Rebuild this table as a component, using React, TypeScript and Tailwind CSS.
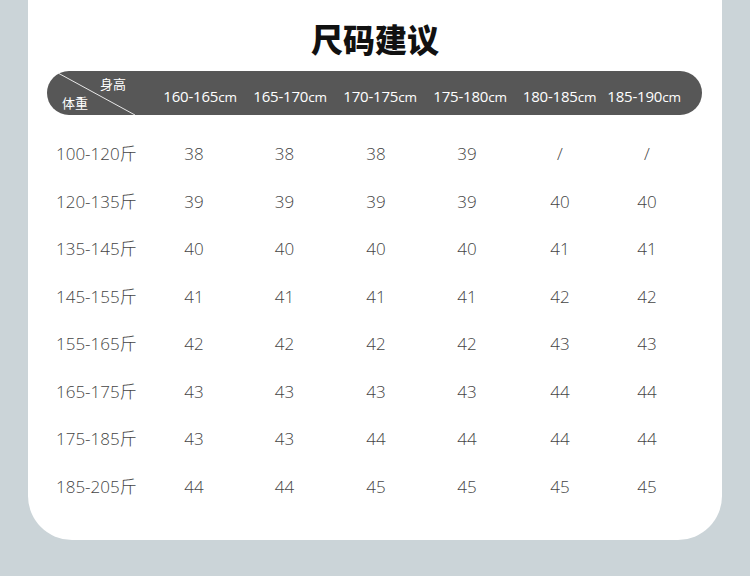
const heights = ["160-165cm", "165-170cm", "170-175cm", "175-180cm", "180-185cm", "185-190cm"];

const rows: [string, string[]][] = [
  ["100-120斤", ["38", "38", "38", "39", "/", "/"]],
  ["120-135斤", ["39", "39", "39", "39", "40", "40"]],
  ["135-145斤", ["40", "40", "40", "40", "41", "41"]],
  ["145-155斤", ["41", "41", "41", "41", "42", "42"]],
  ["155-165斤", ["42", "42", "42", "42", "43", "43"]],
  ["165-175斤", ["43", "43", "43", "43", "44", "44"]],
  ["175-185斤", ["43", "43", "44", "44", "44", "44"]],
  ["185-205斤", ["44", "44", "45", "45", "45", "45"]],
];

function Num({ text }: { text: string }) {
  // split the unit so "cm" can be drawn smaller, like the original font
  const base = text.replace(/cm$/, "");
  return (
    <span>
      {base}
      <span className="text-[13.5px]">cm</span>
    </span>
  );
}

export default function App() {
  return (
    <div className="h-[576px] bg-[#cbd4d8] px-[28px] font-['Open_Sans','Noto_Sans_CJK_SC',sans-serif]">
      <div className="h-[540px] rounded-b-[44px] bg-white">
        <h1 className="pt-[17px] text-center text-[32px] font-black leading-[42px] tracking-[0px] text-[#111] font-['Noto_Sans_CJK_SC',sans-serif]">
          尺码建议
        </h1>

        <div className="mt-[12px] ml-[19px] mr-[20px] h-[44px] rounded-full bg-[#575757] grid grid-cols-[108px_90px_90px_90px_90px_89px_80px] items-center text-white">
          <div className="relative h-[44px]">
            <svg className="absolute left-0 top-0" width="108" height="44" viewBox="0 0 108 44">
              <line x1="11" y1="2" x2="88" y2="44" stroke="#e8e8e8" strokeWidth="1" />
            </svg>
            <span className="absolute left-[53px] top-[5px] text-[13px] leading-[16px] font-['Noto_Sans_CJK_SC',sans-serif]">身高</span>
            <span className="absolute left-[15px] top-[24px] text-[13px] leading-[16px] font-['Noto_Sans_CJK_SC',sans-serif]">体重</span>
          </div>
          {heights.map((h) => (
            <div key={h} className="pt-[6px] text-center text-[15px] tracking-[-0.2px]">
              <Num text={h} />
            </div>
          ))}
        </div>

        <div className="mt-[15px] ml-[19px]">
          {rows.map(([w, vals]) => (
            <div key={w} className="grid h-[47.5px] grid-cols-[102px_90px_91px_92px_90px_96px_78px] items-center text-[17px] font-light text-[#444]">
              <div className="pl-[9px]">{w}</div>
              {vals.map((v, i) => (
                <div key={i} className="text-center">{v}</div>
              ))}
            </div>
          ))}
        </div>
      </div>
    </div>
  );
}
